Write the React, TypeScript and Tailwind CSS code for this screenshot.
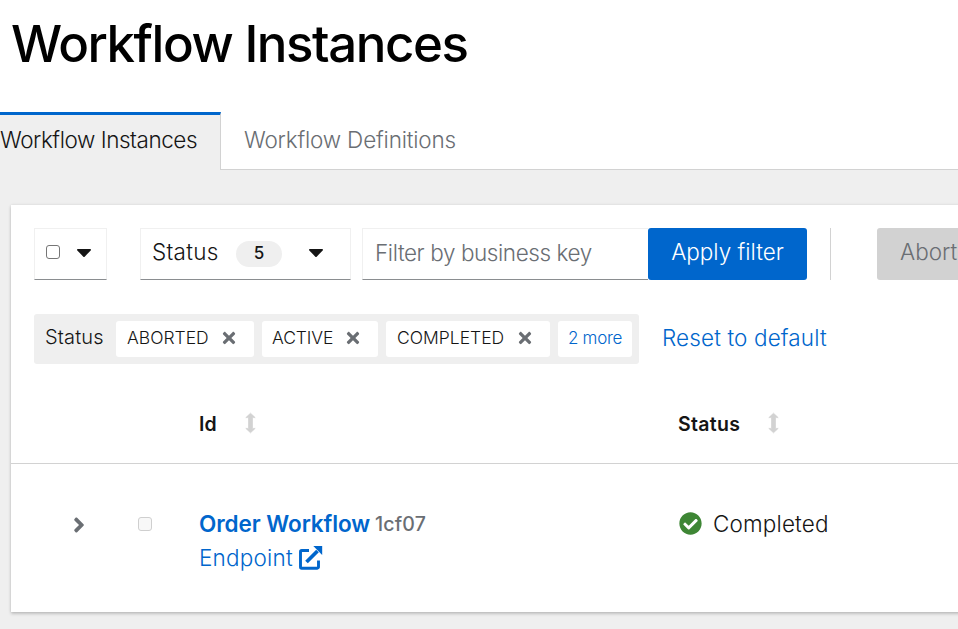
import { FaAngleRight, FaCaretDown, FaCheckCircle, FaTimes } from "react-icons/fa";

function ExternalLinkIcon() {
  return (
    <svg className="h-[24px] w-[24px] shrink-0" viewBox="0 0 24 24" fill="none" stroke="#0066cc">
      <path d="M10 4.500H2.700a1.200 1.200 0 0 0-1.200 1.200v15.300a1.200 1.200 0 0 0 1.200 1.200h15.600a1.200 1.200 0 0 0 1.200-1.200v-6.500" strokeWidth="2.900" />
      <path d="M7.500 16 18.500 5" strokeWidth="3.800" />
      <path d="M14.300 0H23.200v8.900Z" fill="#0066cc" stroke="none" />
    </svg>
  );
}

function SortIcon() {
  return (
    <svg className="mb-[2px] h-[22px] w-[11px] shrink-0" viewBox="0 0 11 22" fill="#d2d2d2">
      <path d="M5.500 1.200 10.200 5.600H7.500V16.400H10.200L5.500 20.800.8 16.400H3.500V5.600H.8Z" stroke="#d2d2d2" strokeWidth=".7" strokeLinejoin="round" />
    </svg>
  );
}

function Chip({ label, className, textClass }: { label: string; className: string; textClass: string }) {
  return (
    <div className={`flex h-9 shrink-0 items-center justify-between rounded-[3px] bg-white pb-[2px] pr-[17px] text-[#151515] ${className}`}>
      <span className={`whitespace-nowrap text-[17.5px] font-light ${textClass}`}>{label}</span>
      <FaTimes className="h-[18px] w-4 text-[#6a6e73]" />
    </div>
  );
}

export default function App() {
  return (
    <div className="h-[629px] w-[958px] overflow-hidden bg-[#efefef] font-['Inter','Liberation_Sans',sans-serif] text-[22.500px] font-light text-[#151515]">
      <header className="flex h-[170px] flex-col justify-between bg-white">
        <h1 className="pl-[11px] pt-[13px] text-[51px] leading-[62px] font-medium tracking-[-1.450px] whitespace-nowrap text-black">Workflow Instances</h1>
        <nav className="flex h-[58px] whitespace-nowrap">
          <div className="w-[221px] shrink-0 border-t-[3px] border-r border-t-[#0066cc] border-r-[#d2d2d2] bg-[#efefef] pt-[10px] leading-[30px] tracking-[-0.450px]">Workflow Instances</div>
          <div className="flex-1 border-b border-[#d2d2d2] pl-[23px] pt-[13px] leading-[30px] tracking-[-0.180px] text-[#6a6e73]">Workflow Definitions</div>
        </nav>
      </header>

      <main className="pl-[11px] pt-[35px]">
        <section className="h-[407px] w-[1000px] bg-white shadow-[0_2px_3px_rgba(3,3,3,0.18),0_0_3px_rgba(3,3,3,0.1)]">
          <div className="flex pl-[23px] pt-[23px] whitespace-nowrap">
            <div className="flex h-[52px] w-[73px] shrink-0 items-center border border-[#f0f0f0] border-b-[#8a8d90] pl-[11px] pb-[5px]">
              <span className="h-[14px] w-[14px] rounded-[3px] border border-[#767676]" />
              <FaCaretDown className="ml-[12px] h-6 w-6 shrink-0" />
            </div>
            <div className="ml-[33px] flex h-[52px] w-[211px] shrink-0 items-center border border-[#f0f0f0] border-b-[#8a8d90] pl-[11px]">
              <span className="w-[84px] pb-[4px] tracking-[0.250px]">Status</span>
              <span className="flex h-[26px] w-[46px] items-center justify-center rounded-full bg-[#efefef] text-[17px] font-medium">5</span>
              <FaCaretDown className="mb-[5px] ml-[22px] h-6 w-6 shrink-0" />
            </div>
            <div className="ml-[11px] flex h-[52px] w-[286px] shrink-0 items-center border border-r-0 border-[#f0f0f0] border-b-[#8a8d90] pb-[2px] pl-3 tracking-[-0.420px] text-[#6a6e73]">Filter by business key</div>
            <div className="flex h-[52px] w-[159px] shrink-0 items-center justify-center rounded-[3px] bg-[#0066cc] pb-[4px] text-white">Apply filter</div>
            <div className="ml-[23px] h-[52px] w-px shrink-0 bg-[#d2d2d2]" />
            <div className="ml-[46px] flex h-[52px] w-[140px] shrink-0 items-center rounded-[3px] bg-[#d2d2d2] pb-[4px] pl-[23px] text-[#6a6e73]">Abort</div>
          </div>

          <div className="flex items-center pl-[23px] pt-[34px] whitespace-nowrap">
            <div className="flex h-[50px] w-[605px] shrink-0 items-center gap-2 rounded-[3px] bg-[#efefef] pl-[11px]">
              <span className="w-[63px] pb-[4px] text-[20px] tracking-[0.150px]">Status</span>
              <Chip label="ABORTED" className="w-[138px] pl-[11px]" textClass="tracking-[0px]" />
              <Chip label="ACTIVE" className="w-[116px] pl-[10px]" textClass="tracking-[-0.100px]" />
              <Chip label="COMPLETED" className="w-[164px] pl-[11px]" textClass="tracking-[0px]" />
              <div className="flex h-9 w-[74px] shrink-0 items-center justify-center rounded-[3px] bg-white pb-px text-[17px] tracking-[-0.300px] text-[#0066cc]">2 more</div>
            </div>
            <span className="ml-[23px] pb-[2px] tracking-[0.120px] text-[#0066cc]">Reset to default</span>
          </div>

          <div className="flex h-[100px] items-center border-b border-[#d2d2d2] pt-[20px] pl-[188px] text-[19.500px] font-semibold">
            <div className="flex w-[479px] items-center">
              <span className="w-[46px] pt-[2px]">Id</span>
              <SortIcon />
            </div>
            <span className="w-[90px] pt-[2px] tracking-[0.300px]">Status</span>
            <SortIcon />
          </div>

          <div className="flex pt-[43px] leading-[34px] whitespace-nowrap">
            <div className="flex h-[36px] w-[127px] items-center pl-[56px]">
              <FaAngleRight className="h-6 w-6 text-[#6a6e73]" />
            </div>
            <div className="flex h-[34px] w-[61px] items-center">
              <span className="h-[14px] w-[14px] rounded-[3px] border border-[#cfcfcf] bg-[#f8f8f8]" />
            </div>
            <div className="w-[480px]">
              <div className="flex">
                <span className="w-[176px] font-semibold tracking-[-0.070px] text-[#0066cc]">Order Workflow</span>
                <span className="text-[19.500px] font-medium tracking-[0.200px] text-[#6a6e73]">1cf07</span>
              </div>
              <div className="flex items-center text-[#0066cc]">
                <span className="w-[100px] tracking-[0.200px]">Endpoint</span>
                <ExternalLinkIcon />
              </div>
            </div>
            <div className="flex h-[34px] items-center">
              <FaCheckCircle className="mr-[11px] mb-px h-[23px] w-[23px] text-[#3e8635]" />
              <span className="tracking-[0.150px]">Completed</span>
            </div>
          </div>
        </section>
      </main>
    </div>
  );
}
